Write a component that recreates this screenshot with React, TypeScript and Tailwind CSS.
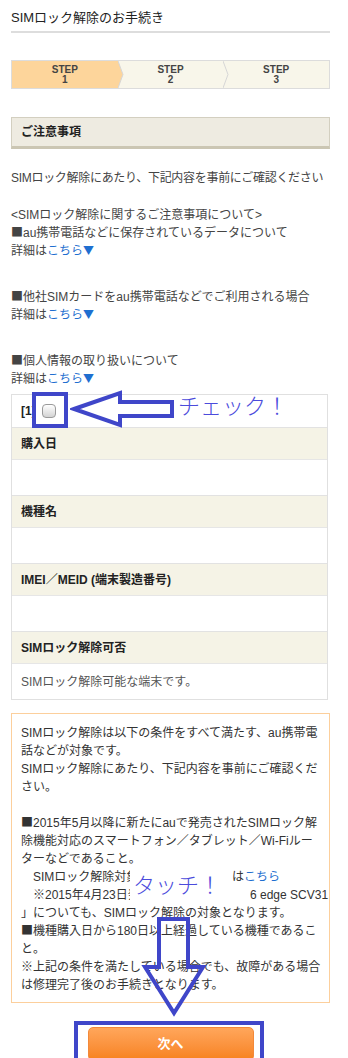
import type { ReactNode } from 'react';

const steps = ['1', '2', '3'];

const Sq = () => <span className="font-['Noto_Sans_CJK_JP',sans-serif] leading-none">■</span>;

const notes: { title: ReactNode; lead?: string; gap: string }[] = [
  {
    lead: '<SIMロック解除に関するご注意事項について>',
    title: 'au携帯電話などに保存されているデータについて',
    gap: 'mt-[19px]',
  },
  { title: '他社SIMカードをau携帯電話などでご利用される場合', gap: 'mt-[28px]' },
  { title: '個人情報の取り扱いについて', gap: 'mt-[28px]' },
];

const rows = [
  { label: '購入日', value: '' },
  { label: '機種名', value: '' },
  { label: 'IMEI／MEID (端末製造番号)', value: '' },
  { label: 'SIMロック解除可否', value: 'SIMロック解除可能な端末です。' },
];

const Link = ({ arrow = true }: { arrow?: boolean }) => (
  <span className="text-[#1f6fd0]">
    こちら
    {arrow && <span className="font-['Noto_Sans_CJK_JP',sans-serif] text-[11px] leading-none">▼</span>}
  </span>
);

const App = () => {
  return (
    <div className="relative w-[348px] bg-white pl-[11px] pr-[18px] pb-[40px] font-['Liberation_Sans','Noto_Sans_CJK_JP',sans-serif] text-[#333]">
      {/* title */}
      <div className="pt-[9px] text-[13px] leading-[18px] text-[#222]">SIMロック解除のお手続き</div>
      <div className="mt-[4px] h-[2px] bg-[#dddddd]" />

      {/* steps */}
      <div className="mt-[27px] flex h-[29px] border border-[#dcdcdc] bg-[#f8f6ea]">
        {steps.map((n, i) => (
          <div
            key={n}
            className={`relative flex flex-1 flex-col items-center justify-center text-[10px] font-bold leading-[10px] text-[#444] ${
              i === 0 ? 'bg-[#fdd59b]' : ''
            }`}
          >
            <span>STEP</span>
            <span>{n}</span>
            {i < 2 && (
              <svg
                className="absolute left-full top-0 z-10 h-full w-[6px]"
                viewBox="0 0 6 27"
                preserveAspectRatio="none"
              >
                <path
                  d="M0 0 L5 13.5 L0 27"
                  fill={i === 0 ? '#fdd59b' : '#f8f6ea'}
                  stroke="#d6d6d6"
                  strokeWidth="1"
                />
              </svg>
            )}
          </div>
        ))}
      </div>

      {/* notice header */}
      <div className="mt-[28px] flex h-[32px] items-center border border-[#d3cfc0] border-b-[3px] border-b-[#cbc6b3] bg-[#eeebe1] pl-[9px] text-[12px] font-bold text-[#222]">
        ご注意事項
      </div>

      <div className="whitespace-nowrap text-[12px] leading-[18px] text-[#444]">
        <p className="mt-[20px] tracking-[-0.3px]">SIMロック解除にあたり、下記内容を事前にご確認ください</p>
        {notes.map((note, i) => (
          <div key={i} className={note.gap}>
            {note.lead && <p>{note.lead}</p>}
            <p>
              <Sq />
              {note.title}
            </p>
            <p>
              詳細は<Link />
            </p>
          </div>
        ))}
      </div>

      {/* table */}
      <div className="mr-[2px] mt-[6px] border border-[#e0e0e0]">
        <div className="flex h-[32px] items-center pl-[9px]">
          <span className="text-[12px] font-bold text-[#222]">[1]</span>
          <span className="ml-[6px] h-[14px] w-[14px] rounded-[4px] border border-[#9a9a9a] bg-gradient-to-b from-white to-[#d4d4d4]" />
        </div>
        {rows.map(row => (
          <div key={row.label}>
            <div className="flex h-[32px] items-center border-t border-[#e2e2e2] bg-[#f5f3e6] pl-[9px] text-[12px] font-bold text-[#222]">
              {row.label}
            </div>
            <div className="flex h-[36px] items-center border-t border-[#e6e6e6] pl-[9px] text-[12px] text-[#555]">
              {row.value}
            </div>
          </div>
        ))}
      </div>

      {/* conditions box */}
      <div className="mt-[13px] whitespace-nowrap border border-[#fccf9c] px-[9px] pb-[8px] pt-[10px] text-[12px] leading-[18px] text-[#333]">
        <p>SIMロック解除は以下の条件をすべて満たす、au携帯電</p>
        <p>話などが対象です。</p>
        <p>SIMロック解除にあたり、下記内容を事前にご確認くだ</p>
        <p>さい。</p>
        <p>&nbsp;</p>
        <p>
          <Sq />
          2015年5月以降に新たにauで発売されたSIMロック解
        </p>
        <p>除機能対応のスマートフォン／タブレット／Wi-Fiルー</p>
        <p>ターなどであること。</p>
        <p>
          <span className="inline-block w-[211px]">{'　'}SIMロック解除対象機種一覧</span>は<Link arrow={false} />
        </p>
        <p>
          <span className="inline-block w-[229px]">{'　'}※2015年4月23日発売「Galaxy S</span>6 edge SCV31
        </p>
        <p>」についても、SIMロック解除の対象となります。</p>
        <p>
          <Sq />
          機種購入日から180日以上経過している機種であるこ
        </p>
        <p>と。</p>
        <p>※上記の条件を満たしている場合でも、故障がある場合</p>
        <p>は修理完了後のお手続きとなります。</p>
      </div>

      <button className="mx-auto mt-[24px] flex h-[34px] w-[166px] items-center justify-center rounded-[5px] border border-[#f3893a] bg-gradient-to-b from-[#ffa65a] to-[#f7821c] text-[13px] font-bold text-white">
        次へ
      </button>

      {/* annotations */}
      <div className="absolute left-[32px] top-[392px] h-[36px] w-[36px] border-[4px] border-[#3f46c9]" />
      <svg className="absolute left-[70px] top-[388px] h-[42px] w-[106px]" viewBox="0 0 106 42">
        <path
          d="M4 21 L50 5 L50 14 L102 14 L102 28 L50 28 L50 37 Z"
          fill="white"
          stroke="#3f46c9"
          strokeWidth="4"
        />
      </svg>
      <div className="absolute left-[178px] top-[394px] text-[22px] font-light leading-[26px] text-[#4b4bdc]">
        チェック！
      </div>

      <div className="absolute left-[130px] top-[868px] h-[37px] w-[101px] bg-white pl-[3px] text-[22px] font-light leading-[35px] text-[#4b4bdc]">
        タッチ！
      </div>
      <svg className="absolute left-[139px] top-[915px] h-[104px] w-[70px]" viewBox="0 0 70 104">
        <path
          d="M20 4 L49 4 L49 52 L64 52 L35 98 L6 52 L20 52 Z"
          fill="none"
          stroke="#3f46c9"
          strokeWidth="4"
        />
      </svg>
      <div className="absolute left-[74px] top-[1021px] h-[50px] w-[190px] border-[4px] border-[#3f46c9]" />
    </div>
  );
};

export default App;
